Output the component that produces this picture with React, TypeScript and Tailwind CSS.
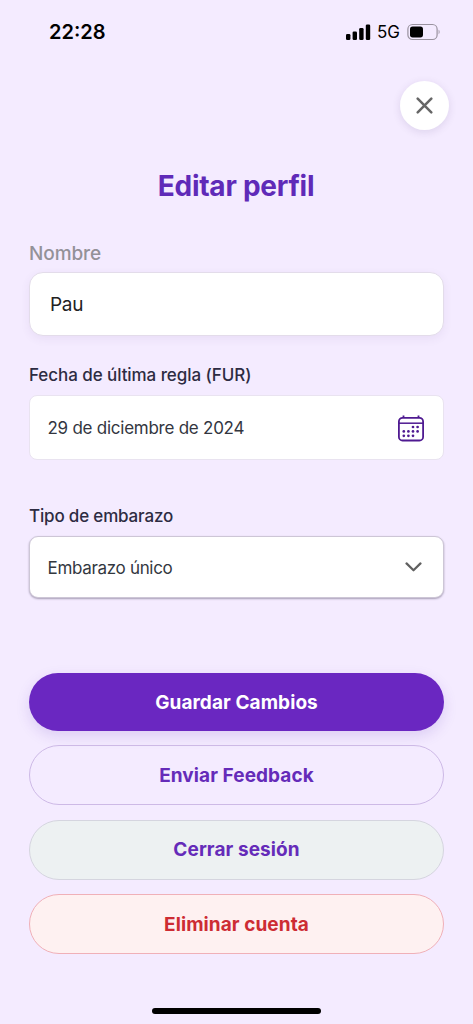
import React from 'react';

const calendarDots = [
  [15, 12], [19.6, 12],
  [5.8, 16.4], [10.4, 16.4], [15, 16.4], [19.6, 16.4],
  [5.8, 20.8], [10.4, 20.8], [15, 20.8],
];

const StatusBar: React.FC = () => (
  <div className="flex h-16 items-center justify-between pl-[49px] pr-8 text-black">
    <span className="text-[20px] font-semibold leading-6">22:28</span>
    <div className="flex items-center">
      <svg width="25" height="16" viewBox="0 0 25 16" fill="currentColor">
        <rect x="0" y="10" width="4.4" height="6" rx="1.3" />
        <rect x="6.6" y="7.5" width="4.4" height="8.5" rx="1.3" />
        <rect x="13.2" y="4" width="4.4" height="12" rx="1.3" />
        <rect x="19.8" y="0.5" width="4.4" height="15.5" rx="1.3" />
      </svg>
      <span className="ml-[6px] text-[17px] leading-6">5G</span>
      <svg className="ml-[7px]" width="34" height="18" viewBox="0 0 34 18" fill="none">
        <rect x="0.9" y="1.5" width="29.2" height="15" rx="4.6" stroke="#99929f" strokeWidth="1.2" />
        <rect x="3" y="3.6" width="13" height="10.8" rx="2.6" fill="#000" />
        <path d="M31.6 6.8c1.3.5 1.3 3.9 0 4.4z" fill="#99929f" />
      </svg>
    </div>
  </div>
);

const CalendarIcon: React.FC = () => (
  <svg className="mt-px" width="26" height="27" viewBox="0 0 26 27" fill="none" stroke="#4f1a91">
    <rect x="0.9" y="2.9" width="24.2" height="22.6" rx="3.6" strokeWidth="1.8" />
    <path d="M1 8.2h24" strokeWidth="1.5" />
    <path d="M5.5 0.6v2.2M20.5 0.6v2.2" strokeWidth="1.8" />
    <g fill="#4f1a91" stroke="none">
      {calendarDots.map(([x, y]) => (
        <circle key={`${x}-${y}`} cx={x} cy={y} r="1.35" />
      ))}
    </g>
  </svg>
);

export default function App() {
  return (
    <div className="flex h-[1024px] w-[473px] flex-col overflow-hidden bg-[#f4ebff] font-['Inter',sans-serif]">
      <StatusBar />

      <div className="flex justify-end pr-6 pt-[17px]">
        <button
          aria-label="Cerrar"
          className="flex size-[49px] items-center justify-center rounded-full bg-white shadow-[0_2px_8px_rgba(60,30,100,0.12)]"
        >
          <svg width="17" height="17" viewBox="0 0 17 17" fill="none" stroke="#666" strokeWidth="2.5" strokeLinecap="round">
            <path d="M1.7 1.7l13.6 13.6M15.3 1.7L1.7 15.3" />
          </svg>
        </button>
      </div>

      <h1 className="mt-[38px] pr-px text-center text-[28px] font-bold leading-9 tracking-[-0.25px] text-[#5f2ab8]">
        Editar perfil
      </h1>

      <form className="flex flex-col px-[29px]">
        <label className="mt-[38px] text-[19px] font-medium leading-6 tracking-[-0.1px] text-[#939198]">Nombre</label>
        <div className="mt-[6px] flex h-16 items-center rounded-[14px] border border-[#e3dcea] bg-white pl-5 pt-[3px] text-[19px] tracking-[-0.3px] text-[#222] shadow-[0_3px_10px_rgba(80,50,130,0.07)]">
          Pau
        </div>

        <label className="mt-[27px] text-[17px] font-medium leading-6 tracking-[-0.07px] text-[#2d2b42]">
          Fecha de última regla (FUR)
        </label>
        <div className="mt-[8px] flex h-[65px] items-center justify-between rounded-[8px] border border-[#e9e3f0] bg-white pl-[17.5px] pr-[19px] text-[17px] tracking-[-0.25px] text-[#33363f]">
          <span className="pt-[2px]">29 de diciembre de 2024</span>
          <CalendarIcon />
        </div>

        <label className="mt-[44px] text-[17px] font-medium leading-6 tracking-[-0.17px] text-[#2d2b42]">
          Tipo de embarazo
        </label>
        <div className="mt-[8px] flex h-[62px] items-center justify-between rounded-[9px] border border-[#cdc6d6] bg-white pl-[17.5px] pr-[21px] text-[17px] tracking-[-0.32px] text-[#33383f] shadow-[0_1px_2px_rgba(50,40,70,0.4)]">
          <span className="pt-[3px]">Embarazo único</span>
          <svg width="17" height="10" viewBox="0 0 17 10" fill="none" stroke="#606060" strokeWidth="2.2" strokeLinecap="round" strokeLinejoin="round">
            <path d="M1.5 1.4l7 6.9 7-6.9" />
          </svg>
        </div>

        <div className="mt-[75px] flex flex-col text-[19px] font-bold tracking-[0.08px] text-[#652bb9]">
          <button type="button" className="h-[58px] rounded-full bg-[#6a27c1] pt-[3px] text-white shadow-[0_5px_14px_rgba(90,40,180,0.15)]">
            Guardar Cambios
          </button>
          <button type="button" className="mt-[14px] h-[60px] rounded-full border border-[#cdb9e6] pt-[3px]">
            Enviar Feedback
          </button>
          <button type="button" className="mt-[15px] h-[60px] rounded-full border border-[#d5d5df] bg-[#edf1f2] pt-px">
            Cerrar sesión
          </button>
          <button type="button" className="mt-[14px] h-[60px] rounded-full border border-[#f0b0b8] bg-[#fef1f1] pt-[3px] text-[#cd2c33]">
            Eliminar cuenta
          </button>
        </div>
      </form>

      <div className="mx-auto mb-[10px] mt-auto h-[6px] w-[169px] rounded-full bg-black" />
    </div>
  );
}
